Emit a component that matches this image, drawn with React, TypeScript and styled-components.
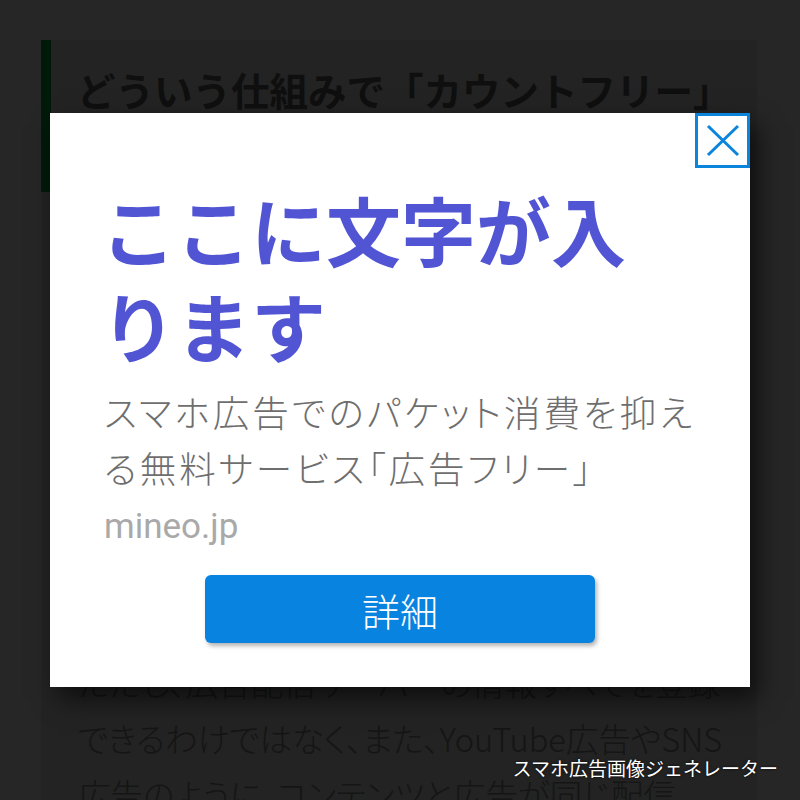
import React from "react";
import styled, { createGlobalStyle } from "styled-components";

const GlobalStyle = createGlobalStyle`
  html, body {
    margin: 0;
    padding: 0;
    background: #262626;
    font-family: "Noto Sans CJK JP", "Noto Sans", sans-serif;
  }
  #root {
    width: 800px;
    height: 800px;
    overflow: hidden;
  }
`;

const Page = styled.div`
  position: relative;
  width: 800px;
  height: 800px;
  overflow: hidden;
  background: #262626;
  padding: 40px 43px 0 41px;
  box-sizing: border-box;
`;

const Article = styled.article`
  background: #222322;
  height: 100%;
`;

const ArticleHeading = styled.h2`
  margin: 0;
  border-left: 10px solid #001a0a;
  padding: 24px 0 26px 26px;
  font-size: 38.5px;
  line-height: 51px;
  font-weight: 700;
  color: #0f0f0f;
  white-space: nowrap;
`;

const ArticleBody = styled.p`
  margin: 14px 0 0;
  padding: 0 37px;
  font-size: 32.5px;
  line-height: 56px;
  font-weight: 300;
  color: #151515;
  white-space: nowrap;
  font-feature-settings: "palt";
`;

const Modal = styled.div`
  position: absolute;
  left: 50px;
  top: 113px;
  width: 700px;
  height: 574px;
  background: #ffffff;
  box-shadow: 8px 12px 24px rgba(0, 0, 0, 0.6);
  box-sizing: border-box;
  padding: 68px 54px 44px 54px;
  display: flex;
  flex-direction: column;
`;

const CloseButton = styled.button`
  position: absolute;
  top: 0;
  right: 0;
  width: 55px;
  height: 55px;
  box-sizing: border-box;
  border: 3px solid #0b84dc;
  background: #ffffff;
  padding: 0;
  display: flex;
  align-items: center;
  justify-content: center;
  cursor: pointer;
`;

const Headline = styled.h1`
  margin: 0 0 0 -3px;
  font-size: 75px;
  line-height: 96px;
  font-weight: 700;
  color: #5155d4;
`;

const Description = styled.p`
  margin: 11px 0 0;
  font-size: 36.5px;
  line-height: 56px;
  font-weight: 300;
  color: #6e6e6e;
  letter-spacing: 3px;
  font-feature-settings: "palt";
`;

const Domain = styled.div`
  margin-top: 11px;
  font-family: Roboto, "Noto Sans", sans-serif;
  font-size: 35px;
  line-height: 40px;
  font-weight: 400;
  color: #a9a9a9;
`;

const DetailButton = styled.button`
  align-self: center;
  margin-top: 28px;
  width: 390px;
  height: 68px;
  border: none;
  border-radius: 6px;
  background: #0883e0;
  color: #ffffff;
  font-family: inherit;
  font-size: 38px;
  font-weight: 300;
  box-shadow: 2px 3px 4px rgba(0, 0, 0, 0.3);
  cursor: pointer;
`;

const Caption = styled.div`
  position: absolute;
  right: 22px;
  bottom: 20px;
  font-size: 19px;
  line-height: 24px;
  color: #ffffff;
  text-shadow: 0 0 3px rgba(0, 0, 0, 0.8);
`;

export default function App() {
  return (
    <>
      <GlobalStyle />
      <Page>
        <Article>
          <ArticleHeading>
            どういう仕組みで「カウントフリー」
            <br />
            になっているの？
          </ArticleHeading>
          <ArticleBody>
            mineoでは、特定のサービスの通信を
            <br />
            データ容量から除外しています。
            <br />
            通信先のサーバーを識別することで、
            <br />
            広告の通信だけをカウントしない
            <br />
            仕組みを実現しています。
            <br />
            広告配信サーバーの情報を登録し、
            <br />
            その通信を対象外としています。
            <br />
            スマホでの広告表示も対象です。
            <br />
            ただし、広告配信サーバーの情報すべてを登録
            <br />
            できるわけではなく、また、YouTube広告やSNS
            <br />
            広告のように、コンテンツと広告が同じ配信
          </ArticleBody>
        </Article>

        <Modal>
          <CloseButton aria-label="閉じる">
            <svg width="34" height="33" viewBox="0 0 34 33">
              <path
                d="M2 2 L32 31 M32 2 L2 31"
                stroke="#0b84dc"
                strokeWidth="3"
                fill="none"
              />
            </svg>
          </CloseButton>
          <Headline>
            ここに文字が入
            <br />
            ります
          </Headline>
          <Description>スマホ広告でのパケット消費を抑える無料サービス「広告フリー」</Description>
          <Domain>mineo.jp</Domain>
          <DetailButton>詳細</DetailButton>
        </Modal>

        <Caption>スマホ広告画像ジェネレーター</Caption>
      </Page>
    </>
  );
}
